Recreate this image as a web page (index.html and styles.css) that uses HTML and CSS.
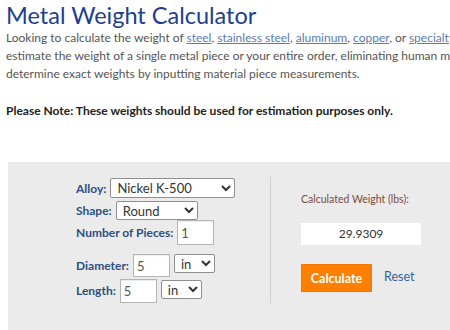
FILE: index.html
```html
<!DOCTYPE html>
<html>
<head>
<meta charset="utf-8">
<link rel="stylesheet" href="styles.css">
</head>
<body>
<div class="page">
  <h1 class="title">Metal Weight Calculator</h1>
  <p class="intro">Looking to calculate the weight of <a href="#">steel</a>, <a href="#">stainless steel</a>, <a href="#">aluminum</a>, <a href="#">copper</a>, or <a href="#">specialty metals</a>? Use our calculator to<br>estimate the weight of a single metal piece or your entire order, eliminating human mistakes. Simply enter your data to<br>determine exact weights by inputting material piece measurements.</p>
  <p class="note">Please Note: These weights should be used for estimation purposes only.</p>
  <div class="calc">
    <div class="inputs">
      <div class="row r-alloy">
        <label>Alloy:</label>
        <select class="sel-alloy"><option>Nickel K-500</option></select>
      </div>
      <div class="row r-shape">
        <label>Shape:</label>
        <select class="sel-shape"><option>Round</option></select>
      </div>
      <div class="row r-pieces">
        <label>Number of Pieces:</label>
        <input class="num" type="text" value="1">
      </div>
      <div class="row r-dia">
        <label>Diameter:</label>
        <input class="num" type="text" value="5">
        <select class="sel-unit"><option>in</option></select>
      </div>
      <div class="row r-len">
        <label>Length:</label>
        <input class="num" type="text" value="5">
        <select class="sel-unit"><option>in</option></select>
      </div>
    </div>
    <div class="result">
      <div class="res-label">Calculated Weight (lbs):</div>
      <div class="res-box">29.9309</div>
      <div class="actions">
        <button class="btn-calc">Calculate</button>
        <a class="reset" href="#">Reset</a>
      </div>
    </div>
  </div>
</div>
</body>
</html>
```
FILE: styles.css
```css
html { overflow: hidden; }
body {
  margin: 0;
  font-family: Lato, "Open Sans", sans-serif;
  background: #fff;
}
.page {
  width: 700px;
  padding: 0 0 0 6px;
}
.title {
  margin: 0;
  padding-top: 1px;
  font-size: 23.5px;
  font-weight: 400;
  line-height: 28px;
  color: #1c3f8f;
}
.intro {
  margin: 0;
  font-size: 12px;
  line-height: 18px;
  color: #555;
  white-space: nowrap;
}
.intro a { color: #5a7bb0; text-decoration: underline; }
.note {
  margin: 19px 0 0 0;
  font-size: 12px;
  line-height: 18px;
  font-weight: 700;
  color: #222;
}
.calc {
  margin: 42px 0 0 2px;
  background: #ebebeb;
  display: flex;
  padding: 15px 0 40px 0;
}
.inputs {
  width: 194px;
  padding-left: 68px;
  padding-top: 1px;
}
.row {
  display: flex;
  align-items: center;
  gap: 4px;
}
.row label {
  font-size: 12px;
  font-weight: 700;
  color: #2d4f86;
}
select {
  font-family: Lato, sans-serif;
  font-size: 13px;
  color: #333;
  background: #fff;
  border: 1px solid #8f8f8f;
  border-radius: 2px;
  padding: 0 2px;
}
.sel-alloy { width: 125px; height: 20px; }
.sel-shape { width: 82px; height: 19px; }
.sel-unit { width: 41px; height: 19px; }
.num {
  font-family: Lato, sans-serif;
  font-size: 13px;
  color: #555;
  border: 1px solid #b5b5b5;
  box-shadow: inset 0 1px 1px rgba(0,0,0,0.08);
  padding: 0 3px;
  box-sizing: border-box;
  width: 37px;
  background: #fff;
}
.r-alloy { height: 20px; }
.r-shape { margin-top: 3px; height: 19px; }
.r-pieces { margin-top: 0; height: 25px; }
.r-pieces .num { height: 25px; }
.r-dia { margin-top: 9px; height: 23px; align-items: flex-start; }
.r-dia label { line-height: 23px; }
.r-dia .num { height: 23px; }
.r-len { margin-top: 2px; height: 24px; align-items: flex-start; }
.r-len label { line-height: 24px; }
.r-len .num { height: 24px; }
.r-len .sel-unit { margin-top: 1px; }
.result {
  border-left: 1px solid #cfcfcf;
  padding-left: 30px;
}
.res-label {
  margin-top: 16px;
  font-size: 10.5px;
  color: #7b4a3c;
}
.res-box {
  margin-top: 18px;
  width: 120px;
  height: 22px;
  line-height: 22px;
  background: #fff;
  text-align: center;
  font-size: 12px;
  color: #333;
}
.actions {
  margin-top: 19px;
  display: flex;
  align-items: center;
  gap: 12px;
}
.btn-calc {
  width: 71px;
  height: 28px;
  background: #ff8000;
  border: 1px solid #f07800;
  color: #fff;
  font-family: Lato, sans-serif;
  font-weight: 700;
  font-size: 12.5px;
  padding: 0;
}
.reset {
  font-size: 12.5px;
  color: #35609a;
  text-decoration: none;
  margin-top: -3px;
}
```
